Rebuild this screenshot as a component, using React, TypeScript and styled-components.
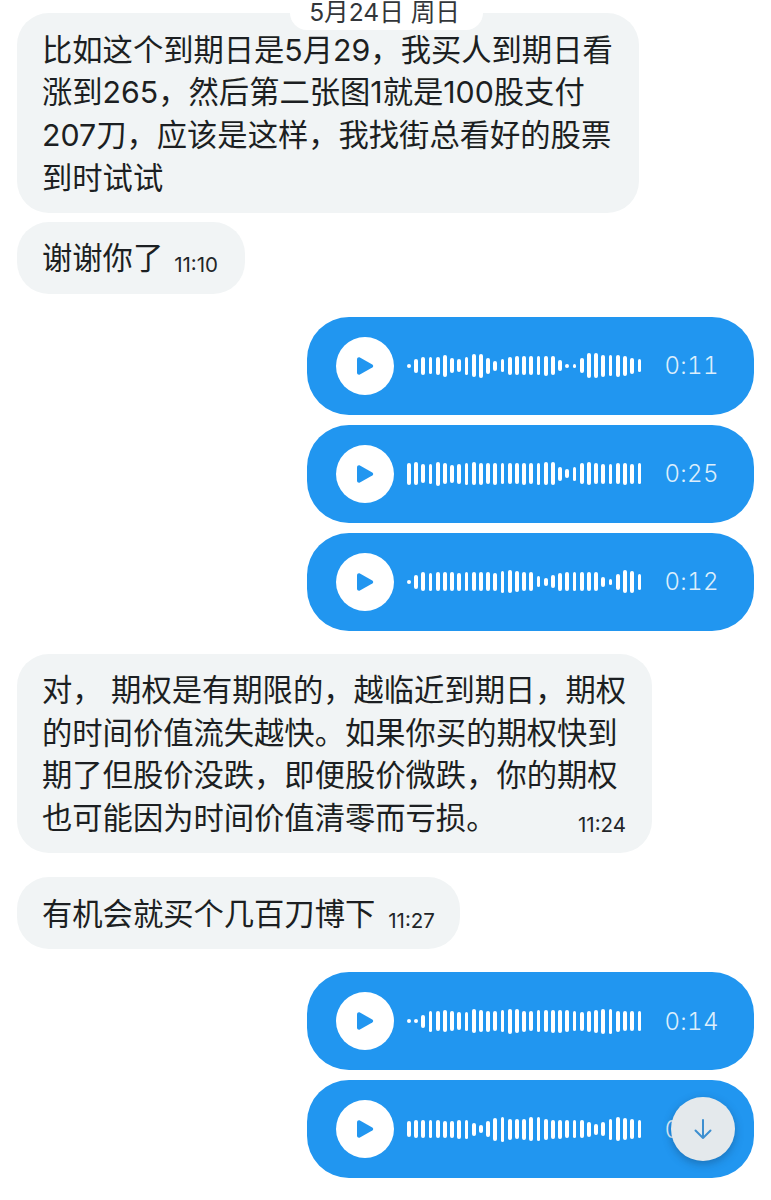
import React from 'react'
import styled, { createGlobalStyle } from 'styled-components'

const GlobalStyle = createGlobalStyle`
  html, body {
    margin: 0;
    padding: 0;
    background: #ffffff;
  }
`

const Page = styled.div`
  position: relative;
  width: 771px;
  height: 1200px;
  overflow: hidden;
  box-sizing: border-box;
  padding: 13px 17px 0;
  display: flex;
  flex-direction: column;
  font-family: Inter, "Noto Sans CJK SC", sans-serif;
  color: #1c1f22;
`

const DatePill = styled.div`
  position: absolute;
  top: 0;
  left: 290px;
  width: 193px;
  height: 30px;
  box-sizing: border-box;
  padding-right: 4px;
  border-radius: 0 0 17px 17px;
  background: #ffffff;
  text-align: center;
  font-size: 24.6px;
  line-height: 25px;
  color: #33363a;
`

const Bubble = styled.div<{ $width: number; $gap: number }>`
  width: ${p => p.$width}px;
  margin-top: ${p => p.$gap}px;
  box-sizing: border-box;
  padding: 15.500px 26px 13.500px 25px;
  border-radius: 32px;
  background: #f1f4f5;
  font-size: 30.3px;
  line-height: 42.7px;
`

const Line = styled.div`
  display: flex;
  white-space: nowrap;
`

const Stamp = styled.span<{ $shift: number }>`
  align-self: flex-end;
  margin-left: ${p => p.$shift}px;
  font-size: 20.5px;
  line-height: 30px;
  color: #222528;
`

const EndStamp = styled(Stamp)`
  margin-left: auto;
`

const VoiceBubble = styled.div<{ $gap: number }>`
  align-self: flex-end;
  width: 447px;
  height: 98px;
  margin-top: ${p => p.$gap}px;
  box-sizing: border-box;
  padding: 0 0 0 29px;
  display: flex;
  align-items: center;
  border-radius: 42px;
  background: #2196f0;
`

const PlayButton = styled.div`
  flex: none;
  width: 58px;
  height: 58px;
  border-radius: 50%;
  background: #ffffff;
  display: flex;
  align-items: center;
  justify-content: center;
`

const Wave = styled.div`
  flex: none;
  width: 234.500px;
  margin-left: 13px;
  display: flex;
  align-items: center;
  justify-content: space-between;
`

const WaveBar = styled.i`
  display: block;
  width: 3.700px;
  border-radius: 2px;
  background: #ffffff;
`

const Duration = styled.span`
  margin-left: 23px;
  font-size: 24px;
  font-weight: 300;
  letter-spacing: 0.3px;
  font-variant-numeric: tabular-nums;
  color: #dceefc;
`

const ScrollButton = styled.div`
  position: absolute;
  left: 671px;
  top: 1097px;
  width: 64px;
  height: 64px;
  border-radius: 50%;
  background: #e4e9ec;
  box-shadow: 0 3px 9px rgba(20, 50, 80, 0.35);
  display: flex;
  align-items: center;
  justify-content: center;
`

interface IVoice {
  gap: number
  time: string
  bars: number[]
}

const voices: IVoice[] = [
  {
    gap: 23,
    time: '0:11',
    bars: [4, 14, 18, 17, 18, 22, 15, 13, 18, 23, 24, 16, 10, 13, 18, 19, 19, 19, 19, 20, 19, 11, 4, 4, 15, 25, 25, 22, 21, 22, 20, 16, 13],
  },
  {
    gap: 10,
    time: '0:25',
    bars: [22, 23, 19, 20, 24, 21, 18, 20, 22, 23, 22, 21, 22, 21, 21, 21, 22, 21, 22, 23, 23, 14, 9, 14, 21, 23, 21, 20, 20, 21, 22, 20, 21],
  },
  {
    gap: 10,
    time: '0:12',
    bars: [4, 14, 19, 18, 19, 19, 19, 18, 19, 19, 19, 19, 18, 22, 23, 21, 19, 19, 11, 8, 13, 18, 19, 19, 19, 19, 19, 10, 6, 16, 23, 22, 16],
  },
]

const laterVoices: IVoice[] = [
  {
    gap: 23,
    time: '0:14',
    bars: [4, 4, 13, 21, 20, 22, 20, 18, 19, 24, 22, 21, 20, 22, 25, 24, 21, 20, 22, 22, 23, 23, 22, 20, 19, 21, 23, 25, 25, 21, 20, 20, 20],
  },
  {
    gap: 10,
    time: '0:',
    bars: [16, 18, 18, 18, 18, 17, 17, 19, 19, 13, 8, 16, 23, 25, 21, 20, 21, 24, 24, 21, 19, 19, 18, 18, 18, 15, 11, 14, 21, 24, 22, 20, 18],
  },
]

function Voice({ gap, time, bars }: IVoice) {
  return (
    <VoiceBubble $gap={gap}>
      <PlayButton>
        <svg width="20" height="20" viewBox="0 0 20 20">
          <path
            d="M2 3.2c0-1.5 1.6-2.4 2.9-1.7l12.4 7c1.2.7 1.2 2.4 0 3.1l-12.4 7C3.6 19.3 2 18.300 2 16.800z"
            fill="#2196f0"
          />
        </svg>
      </PlayButton>
      <Wave>
        {bars.map((h, i) => (
          <WaveBar key={i} style={{ height: h }} />
        ))}
      </Wave>
      <Duration>{time}</Duration>
    </VoiceBubble>
  )
}

export default function App() {
  return (
    <Page>
      <GlobalStyle />
      <DatePill>5月24日 周日</DatePill>
      <Bubble $width={622} $gap={0}>
        <Line>比如这个到期日是5月29，我买人到期日看</Line>
        <Line>涨到265，然后第二张图1就是100股支付</Line>
        <Line>207刀，应该是这样，我找街总看好的股票</Line>
        <Line>到时试试</Line>
      </Bubble>
      <Bubble $width={228} $gap={9}>
        <Line>
          谢谢你了<Stamp $shift={11}>11:10</Stamp>
        </Line>
      </Bubble>
      {voices.map(v => (
        <Voice key={v.time} {...v} />
      ))}
      <Bubble $width={635} $gap={23}>
        <Line>对， 期权是有期限的，越临近到期日，期权</Line>
        <Line>的时间价值流失越快。如果你买的期权快到</Line>
        <Line>期了但股价没跌，即便股价微跌，你的期权</Line>
        <Line>
          也可能因为时间价值清零而亏损。<EndStamp $shift={0}>11:24</EndStamp>
        </Line>
      </Bubble>
      <Bubble $width={443} $gap={24}>
        <Line>
          有机会就买个几百刀博下<Stamp $shift={13}>11:27</Stamp>
        </Line>
      </Bubble>
      {laterVoices.map(v => (
        <Voice key={v.time} {...v} />
      ))}
      <ScrollButton>
        <svg width="20" height="22" viewBox="0 0 20 22" fill="none" stroke="#3d8fd0" strokeWidth="2" strokeLinecap="round" strokeLinejoin="round">
          <path d="M10 2v18M2.500 12.500 10 20l7.500-7.500" />
        </svg>
      </ScrollButton>
    </Page>
  )
}
